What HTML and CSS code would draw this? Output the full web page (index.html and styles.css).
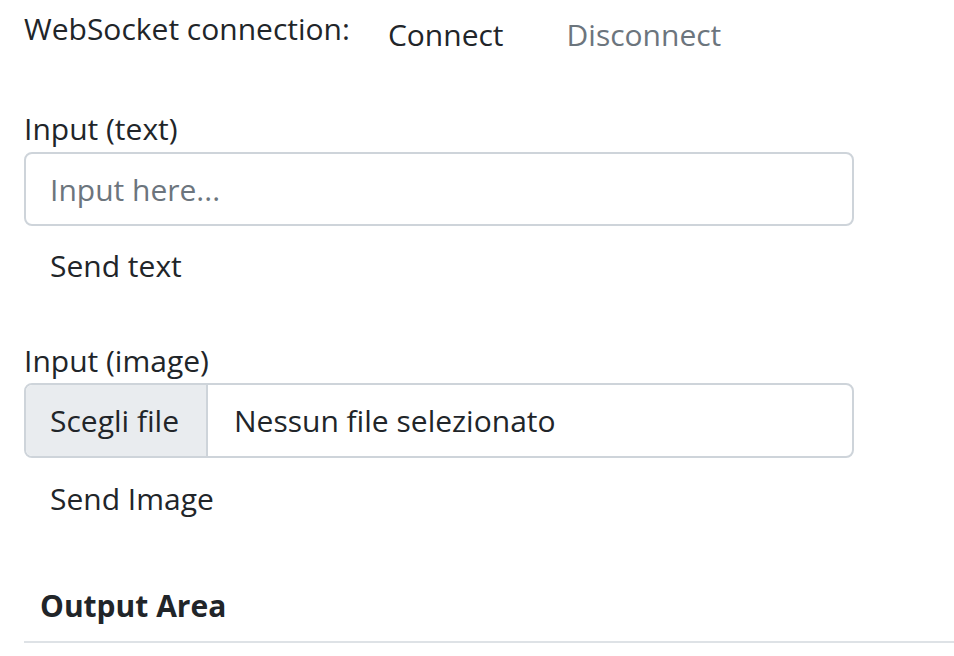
FILE: index.html
```html
<!DOCTYPE html>
<html lang="it">
<head>
<meta charset="utf-8">
<title>WebSocket</title>
<link rel="stylesheet" href="styles.css">
</head>
<body>
<main class="page">
  <div class="conn">
    <span class="conn-label">WebSocket connection:</span>
    <button class="btn btn-connect">Connect</button>
    <button class="btn btn-disabled" disabled>Disconnect</button>
  </div>

  <section class="group group-text">
    <label class="field-label" for="txt">Input (text)</label>
    <input id="txt" class="field" type="text" placeholder="Input here...">
    <button class="btn btn-send">Send text</button>
  </section>

  <section class="group group-image">
    <label class="field-label">Input (image)</label>
    <div class="file">
      <span class="file-btn">Scegli file</span>
      <span class="file-name">Nessun file selezionato</span>
    </div>
    <button class="btn btn-send btn-send-image">Send Image</button>
  </section>

  <section class="output">
    <h5 class="output-title">Output Area</h5>
    <div class="output-rule"></div>
  </section>
</main>
</body>
</html>
```

FILE: styles.css
```css
* { box-sizing: border-box; }
html, body { margin: 0; padding: 0; background: #fff; }
body {
  font-family: "Open Sans", "Noto Sans", sans-serif;
  font-size: 30px;
  color: #212529;
  overflow: hidden;
}
.page { padding-left: 24px; width: 954px; }

.conn { display: flex; align-items: flex-start; height: 60px; padding-top: 6px; }
.conn-label { line-height: 45px; margin-right: 15px; }

.btn {
  font: inherit;
  background: none;
  border: 0;
  padding: 0 23px;
  line-height: 45px;
  color: #212529;
  cursor: pointer;
}
.btn-connect { margin-top: 6px; }
.btn-disabled { margin-top: 6px; margin-left: 17px; color: #6c757d; }

.group { width: 830px; display: flex; flex-direction: column; align-items: flex-start; }
.group-text { margin-top: 46px; }
.group-image { margin-top: 50px; }

.field-label { line-height: 45px; margin-bottom: 1px; }
.group-image .field-label { margin-bottom: 0; }

.field {
  width: 830px;
  height: 74px;
  border: 2px solid #ced4da;
  border-radius: 8px;
  padding: 0 24px;
  font: inherit;
  color: #212529;
  outline: none;
}
.field::placeholder { color: #6c757d; }

.file {
  width: 830px;
  height: 75px;
  border: 2px solid #ced4da;
  border-radius: 8px;
  display: flex;
  overflow: hidden;
}
.file-btn {
  width: 182px;
  background: #e9ecef;
  border-right: 2px solid #ced4da;
  padding: 0 0 0 24px;
  display: flex; align-items: center;
}
.file-name { padding: 0 26px; display: flex; align-items: center; }

.btn-send { padding: 0 26px; margin-top: 17px; }
.btn-send-image { margin-top: 18px; }

.output { margin-top: 62px; }
.output-title { margin: 0; padding-left: 16px; font-size: 30px; font-weight: 700; line-height: 45px; }
.output-rule { height: 2px; background: #dee2e6; margin-top: 13px; width: 930px; }
```
